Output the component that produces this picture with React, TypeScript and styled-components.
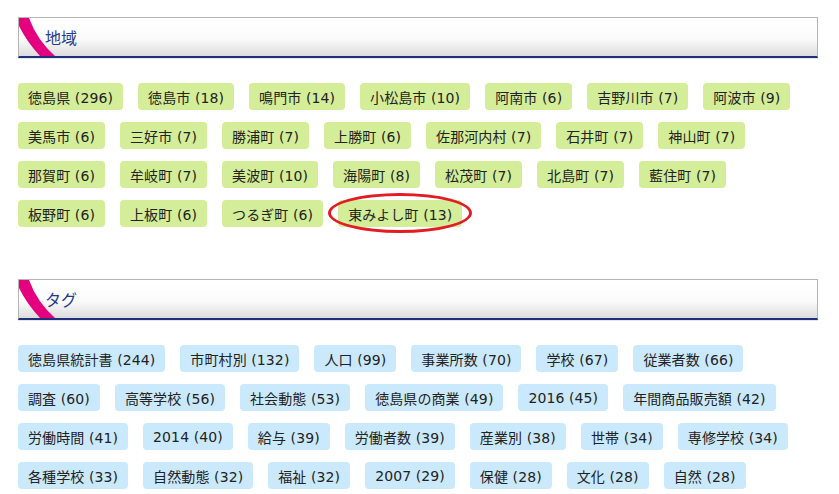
import React from 'react';
import styled, { createGlobalStyle } from 'styled-components';

const GlobalStyle = createGlobalStyle`
    body {
        margin: 0;
        background: #fff;
        font-family: "DejaVu Sans", "Noto Sans CJK JP", sans-serif;
        color: #222;
    }
`

const Page = styled.div`
    width: 800px;
    padding: 17px 18px 0;
`

const Section = styled.section`
    margin-bottom: 52px;
`

const Heading = styled.div`
    position: relative;
    height: 38px;
    display: flex;
    align-items: center;
    padding-left: 26px;
    border: 1px solid #b5b5b5;
    border-bottom: 2px solid #1e2f7c;
    background: linear-gradient(to bottom, #ffffff 0%, #fbfbfb 55%, #dcdcdc 100%);
    box-shadow: 0 1px 0 #e6e6e6;
    overflow: hidden;

    svg {
        position: absolute;
        left: 0;
        top: 0;
    }

    h2 {
        margin: 0;
        font-size: 16px;
        font-weight: normal;
        color: #283c8c;
    }
`

const TagList = styled.div`
    display: flex;
    flex-wrap: wrap;
    column-gap: 15px;
    row-gap: 12px;
    margin-top: 25px;
`

const Tag = styled.span<{ $tone: 'green' | 'blue'; $circled?: boolean }>`
    position: relative;
    display: inline-flex;
    align-items: center;
    height: 27px;
    padding: 0 10px;
    border-radius: 4px;
    font-size: 14px;
    letter-spacing: 0.1px;
    white-space: nowrap;
    background: ${p => (p.$tone === 'green' ? '#d4ed98' : '#cbe9fd')};

    ${p => p.$circled && `
        &::after {
            content: '';
            position: absolute;
            left: -10px;
            right: -10px;
            top: -7px;
            bottom: -6px;
            border: 3px solid #e31b23;
            border-radius: 50%;
        }
    `}
`

const areas = [
    ['徳島県', 296], ['徳島市', 18], ['鳴門市', 14], ['小松島市', 10], ['阿南市', 6], ['吉野川市', 7], ['阿波市', 9],
    ['美馬市', 6], ['三好市', 7], ['勝浦町', 7], ['上勝町', 6], ['佐那河内村', 7], ['石井町', 7], ['神山町', 7],
    ['那賀町', 6], ['牟岐町', 7], ['美波町', 10], ['海陽町', 8], ['松茂町', 7], ['北島町', 7], ['藍住町', 7],
    ['板野町', 6], ['上板町', 6], ['つるぎ町', 6], ['東みよし町', 13],
] as const;

const tags = [
    ['徳島県統計書', 244], ['市町村別', 132], ['人口', 99], ['事業所数', 70], ['学校', 67], ['従業者数', 66],
    ['調査', 60], ['高等学校', 56], ['社会動態', 53], ['徳島県の商業', 49], ['2016', 45], ['年間商品販売額', 42],
    ['労働時間', 41], ['2014', 40], ['給与', 39], ['労働者数', 39], ['産業別', 38], ['世帯', 34], ['専修学校', 34],
    ['各種学校', 33], ['自然動態', 32], ['福祉', 32], ['2007', 29], ['保健', 28], ['文化', 28], ['自然', 28],
] as const;

const Stripe = () => (
    <svg width="40" height="38" viewBox="0 0 40 38">
        <path d="M0 0 L10 0 Q18 22 36 38 L21 38 Q8 24 0 8 Z" fill="#e5007f" />
    </svg>
);

const SectionHeading = ({ title }: { title: string }) => (
    <Heading>
        <Stripe />
        <h2>{title}</h2>
    </Heading>
);

const App = () => (
    <Page>
        <GlobalStyle />
        <Section>
            <SectionHeading title="地域" />
            <TagList>
                {areas.map(([name, count]) => (
                    <Tag key={name} $tone="green" $circled={name === '東みよし町'}>
                        {name} ({count})
                    </Tag>
                ))}
            </TagList>
        </Section>
        <Section>
            <SectionHeading title="タグ" />
            <TagList>
                {tags.map(([name, count]) => (
                    <Tag key={name} $tone="blue">
                        {name} ({count})
                    </Tag>
                ))}
            </TagList>
        </Section>
    </Page>
);

export default App;
